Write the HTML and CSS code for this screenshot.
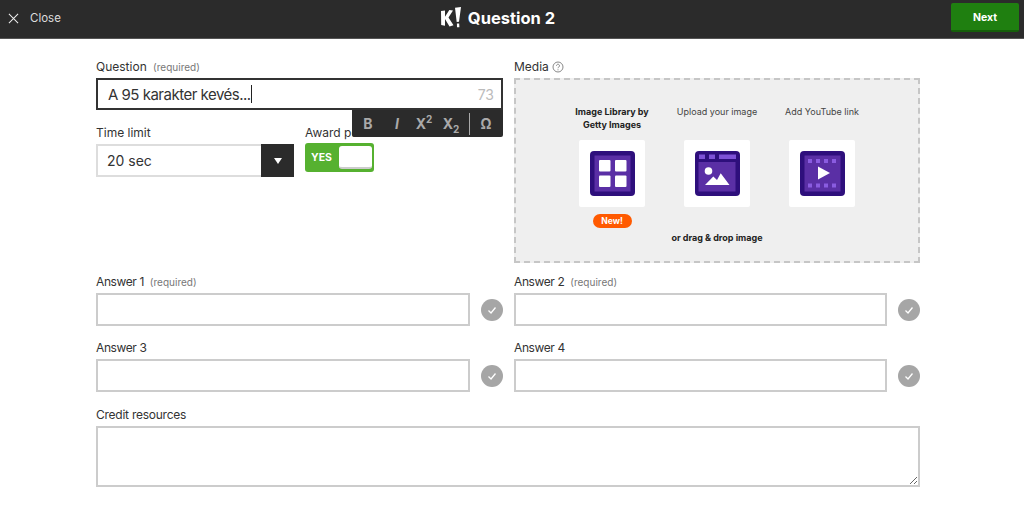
FILE: index.html
```html
<!DOCTYPE html>
<html lang="en">
<head>
<meta charset="utf-8">
<title>Question 2</title>
<link rel="stylesheet" href="styles.css">
</head>
<body>
<header class="topbar">
  <div class="close">
    <svg class="close-icon" viewBox="0 0 12 12"><path d="M1 1l10 10M11 1L1 11"/></svg>
    <span>Close</span>
  </div>
  <div class="title">
    <svg class="logo" viewBox="0 0 23 22"><path d="M1 4l4-.6v6.400l4.300-6.800 3.700.6-4.500 6.800 5 7.800-4 1.200-4.500-7.300v6.700L1.200 18z"/><path d="M15 .8l6-.8-2 14.800-2.300.1zM16.900 16.600l2.300-.1.200 3.700-2.400.1z"/></svg>
    <span>Question 2</span>
  </div>
  <button class="next">Next</button>
</header>

<main class="page">
  <section class="top">
    <div class="left">
      <div class="field">
        <label class="label">Question <small>(required)</small></label>
        <div class="question-input"><span>A 95 karakter kevés...</span><i class="caret"></i><em>73</em></div>
      </div>
      <div class="toolbar">
        <b>B</b><b class="tb-i">I</b><b>X<sup>2</sup></b><b>X<sub>2</sub></b><i class="tb-sep"></i><b>Ω</b>
      </div>
      <div class="settings">
        <div class="field time">
          <label class="label">Time limit</label>
          <div class="select"><span>20 sec</span><div class="arrow"><i></i></div></div>
        </div>
        <div class="field award">
          <label class="label">Award points</label>
          <div class="toggle"><span>YES</span><i></i></div>
        </div>
      </div>
    </div>
    <div class="field media-field">
      <label class="label">Media<svg class="help" viewBox="0 0 12 12"><circle cx="6" cy="6" r="5"/><path d="M4.500 4.700a1.500 1.500 0 1 1 2.300 1.300c-.6.400-.8.600-.8 1.200M6 8.300v1"/></svg></label>
      <div class="media">
        <div class="options">
          <div class="option">
            <p class="option-title strong">Image Library by Getty Images</p>
            <div class="tile">
              <svg class="tile-icon" viewBox="0 0 45 45"><rect width="45" height="45" rx="4" fill="#2e0f7c"/><rect x="4.500" y="4.500" width="36" height="36" fill="#5a2fa5"/><rect x="9" y="9" width="11.500" height="11.500" rx="1" fill="#fff"/><rect x="25" y="9" width="11.500" height="11.500" rx="1" fill="#fff"/><rect x="9" y="24.500" width="11.500" height="11.500" rx="1" fill="#fff"/><rect x="25" y="24.500" width="11.500" height="11.500" rx="1" fill="#fff"/></svg>
            </div>
            <div class="badge">New!</div>
          </div>
          <div class="option">
            <p class="option-title">Upload your image</p>
            <div class="tile">
              <svg class="tile-icon" viewBox="0 0 45 45"><rect width="45" height="45" rx="4" fill="#2e0f7c"/><rect x="3.500" y="11" width="37" height="29.500" fill="#5a2fa5"/><rect x="4" y="3.500" width="6" height="4.500" fill="#7e52d6"/><rect x="14" y="3.500" width="6" height="4.500" fill="#7e52d6"/><rect x="24" y="3.500" width="17" height="4.500" fill="#7e52d6"/><circle cx="13.500" cy="20" r="3.800" fill="#fff"/><path d="M10 34l8.300-8.400 3.700 3.400 3.700-6.700 8.800 11.700z" fill="#fff"/></svg>
            </div>
          </div>
          <div class="option">
            <p class="option-title">Add YouTube link</p>
            <div class="tile">
              <svg class="tile-icon" viewBox="0 0 45 45"><rect width="45" height="45" rx="4" fill="#2e0f7c"/><rect x="4.500" y="4.500" width="36" height="36" fill="#5a2fa5"/><g fill="#8a5ce0"><rect x="8" y="8" width="4" height="4"/><rect x="16" y="8" width="4" height="4"/><rect x="24" y="8" width="4" height="4"/><rect x="32" y="8" width="4" height="4"/><rect x="8" y="32.500" width="4" height="4"/><rect x="16" y="32.500" width="4" height="4"/><rect x="24" y="32.500" width="4" height="4"/><rect x="32" y="32.500" width="4" height="4"/></g><path d="M18 15.500l12 6.500-12 6.500z" fill="#fff"/></svg>
            </div>
          </div>
        </div>
        <p class="drag">or drag &amp; drop image</p>
      </div>
    </div>
  </section>

  <section class="answers">
    <div class="field">
      <label class="label">Answer 1 <small>(required)</small></label>
      <div class="answer-row"><div class="answer"></div><div class="check"><svg viewBox="0 0 12 12"><path d="M2.500 6.500l2.500 2.500 4.500-5.500"/></svg></div></div>
    </div>
    <div class="field">
      <label class="label">Answer 2 <small>(required)</small></label>
      <div class="answer-row"><div class="answer"></div><div class="check"><svg viewBox="0 0 12 12"><path d="M2.500 6.500l2.500 2.500 4.500-5.500"/></svg></div></div>
    </div>
    <div class="field">
      <label class="label">Answer 3</label>
      <div class="answer-row"><div class="answer"></div><div class="check"><svg viewBox="0 0 12 12"><path d="M2.500 6.500l2.500 2.500 4.500-5.500"/></svg></div></div>
    </div>
    <div class="field">
      <label class="label">Answer 4</label>
      <div class="answer-row"><div class="answer"></div><div class="check"><svg viewBox="0 0 12 12"><path d="M2.500 6.500l2.500 2.500 4.500-5.500"/></svg></div></div>
    </div>
  </section>

  <section class="field credit">
    <label class="label">Credit resources</label>
    <textarea class="credit-box"></textarea>
  </section>
</main>
</body>
</html>
```

FILE: styles.css
```css
* { box-sizing: border-box; }
html, body { margin: 0; padding: 0; height: 512px; overflow: hidden; }
body { background: #fff; color: #333; font-family: Inter, "Open Sans", sans-serif; }

.topbar {
  height: 39px;
  padding-bottom: 3px;
  background: #2b2b2b;
  border-bottom: 1px solid #555;
  display: grid;
  grid-template-columns: 1fr auto 1fr;
  align-items: center;
  color: #fff;
}
.close { display: flex; align-items: center; gap: 11px; padding-left: 8px; font-size: 11.500px; color: #ddd; }
.close-icon { width: 11px; height: 11px; fill: none; stroke: #eee; stroke-width: 1.100; margin-bottom: -1px; }
.title { display: flex; align-items: center; gap: 5px; font-size: 16.500px; font-weight: 700; margin-right: 29px; }
.logo { width: 23px; height: 22px; fill: #fff; }
.next {
  justify-self: end;
  width: 68px;
  height: 29px;
  margin-right: 5px;
  padding: 2px 0 0;
  border: 0;
  border-bottom: 2px solid #155f0a;
  border-radius: 2px;
  background: #1f7f10;
  color: #fff;
  font: 700 10.500px Inter, sans-serif;
}

.page { width: 824px; margin-left: 96px; padding-top: 19px; }
.field { display: flex; flex-direction: column; }
.label { display: block; height: 16px; line-height: 17px; margin-bottom: 4px; font-size: 12px; color: #333; white-space: nowrap; }
.label small { font-size: 10px; color: #777; margin-left: 3px; letter-spacing: 0; }

.top { display: grid; grid-template-columns: 407px 406px; column-gap: 11px; height: 205px; }
.left { position: relative; }

.question-input {
  height: 32px;
  border: 2px solid #333;
  display: flex;
  align-items: center;
  padding: 0 7px 0 10px;
  font-size: 15px;
  letter-spacing: -.5px;
  color: #333;
}
.caret { width: 1px; height: 18px; background: #222; }
.question-input em { margin-left: auto; font-style: normal; font-size: 14px; letter-spacing: 0; color: #bbb; }

.toolbar {
  position: absolute;
  top: 52px;
  right: 0;
  width: 151px;
  height: 27px;
  background: #2b2b2b;
  border-radius: 0 0 2px 2px;
  display: grid;
  grid-template-columns: 28px 30px 24px 30px 6px 28px;
  align-items: center;
  justify-items: center;
  padding-left: 2px;
  color: #aaa;
  font-size: 14px;
  z-index: 2;
}
.toolbar b { font-weight: 700; line-height: 1; white-space: nowrap; }
.toolbar .tb-i { font-style: italic; }
.toolbar sup, .toolbar sub { font-size: 10px; line-height: 0; }
.tb-sep { width: 1px; height: 22px; background: #aaa; }

.settings { display: flex; gap: 11px; margin-top: 14px; }
.time { width: 198px; }
.select { height: 33px; display: flex; border: 2px solid #ddd; border-right: 0; }
.select span { flex: 1; line-height: 29px; padding-left: 9px; font-size: 14px; }
.arrow { width: 33px; margin: -2px 0; background: #2b2b2b; display: flex; align-items: center; justify-content: center; }
.arrow i { width: 0; height: 0; border: 4.500px solid transparent; border-top: 6px solid #fff; border-bottom: 0; }
.toggle {
  width: 69px;
  height: 29px;
  margin-top: -1px;
  background: #56b130;
  border-radius: 3px;
  padding: 3px 2px 3px 3px;
  display: flex;
  align-items: center;
  justify-content: space-between;
  color: #fff;
  font-size: 10.500px;
  font-weight: 700;
}
.toggle span { padding-left: 3px; }
.toggle i { width: 33px; height: 23px; border-radius: 3px; background: #fff; border-bottom: 2px solid #ccc; }

.help { width: 12px; height: 12px; fill: none; stroke: #888; stroke-width: 1; vertical-align: -2px; margin-left: 3px; }
.media {
  height: 185px;
  background: #efefef;
  border: 2px dashed #c6c6c6;
  display: flex;
  flex-direction: column;
  align-items: center;
  padding-top: 25px;
}
.options { display: flex; height: 127px; }
.option { width: 105px; display: flex; flex-direction: column; align-items: center; }
.option-title { margin: 0; height: 35px; width: 92px; font-size: 9px; line-height: 13px; text-align: center; color: #444; white-space: normal; }
.option-title.strong { font-weight: 700; color: #222; }
.tile { width: 66px; height: 67px; background: #fff; border-radius: 2px; display: flex; align-items: center; justify-content: center; }
.tile-icon { width: 45px; height: 45px; }
.badge { width: 39px; height: 14px; margin-top: 7px; background: #ff5a00; border-radius: 7px; color: #fff; font-size: 8.500px; font-weight: 700; line-height: 14px; text-align: center; }
.drag { margin: 0; font-size: 9px; font-weight: 700; color: #222; }

.answers { display: grid; grid-template-columns: 407px 406px; column-gap: 11px; row-gap: 14px; margin-top: 11px; }
.answers .label { margin-bottom: 3px; line-height: 16px; letter-spacing: -.4px; }
.answer-row { display: flex; align-items: center; gap: 11px; }
.answer { flex: 1; height: 33px; border: 2px solid #ccc; }
.check { width: 22px; height: 22px; border-radius: 50%; background: #a6a6a6; display: flex; align-items: center; justify-content: center; margin-top: 1px; }
.check svg { width: 12px; height: 12px; fill: none; stroke: #fff; stroke-width: 1.300; }

.credit { margin-top: 14px; }
.credit .label { margin-bottom: 4px; letter-spacing: -.25px; }
.credit-box { display: block; width: 824px; height: 61px; border: 2px solid #ccc; border-radius: 0; padding: 4px; background: #fff; outline: 0; }
```
